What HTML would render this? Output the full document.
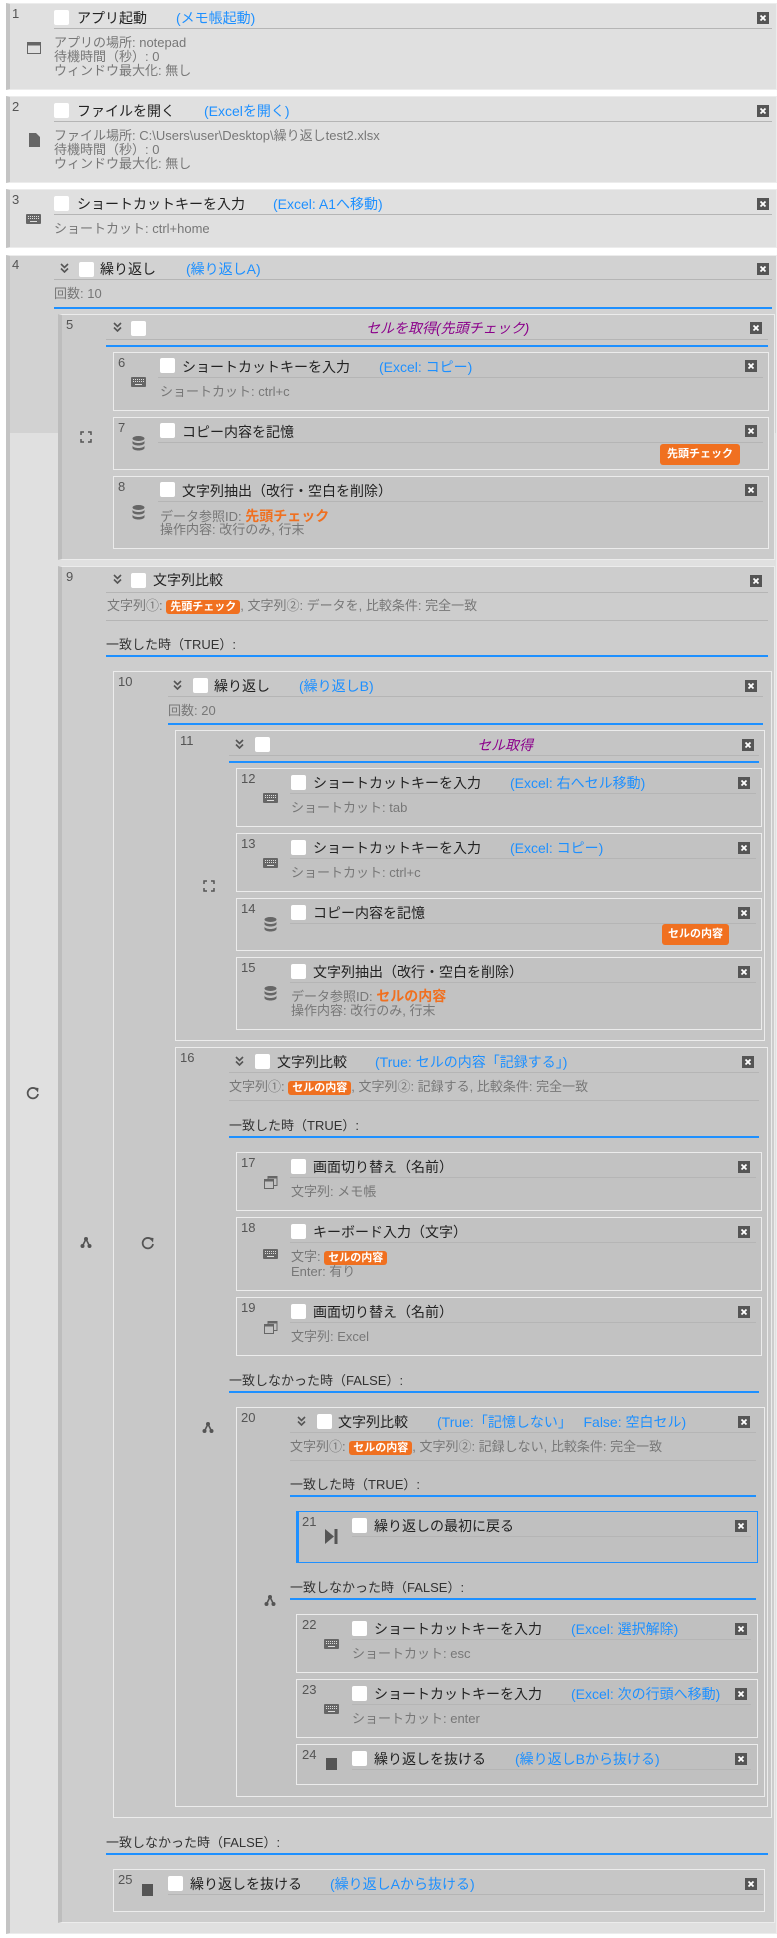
<!DOCTYPE html>
<html><head><meta charset="utf-8"><style>
body{margin:0;width:777px;height:1938px;background:#fff;position:relative;overflow:hidden;font-family:"Liberation Sans","Noto Sans CJK JP",sans-serif}
.a{position:absolute}
.bx{position:absolute;box-sizing:border-box;border:1px solid #ececec}
.n{position:absolute;font-size:13px;color:#555;line-height:14px}
.cb{position:absolute;width:15px;height:15px;background:#fff;border-radius:2px}
.t{position:absolute;font-size:14px;color:#222;line-height:16px;white-space:nowrap}
.s{position:absolute;font-size:14px;color:#1e90ff;line-height:16px;white-space:nowrap}
.p{position:absolute;font-size:14px;color:#8b008b;font-style:italic;line-height:16px;white-space:nowrap}
.d{position:absolute;font-size:13px;color:#777;line-height:14px;white-space:nowrap}
.lb{position:absolute;font-size:13px;color:#333;line-height:14px;white-space:nowrap}
.hl{position:absolute;height:1px;background:#b5b5b5}
.bl{position:absolute;height:2px;background:#1e90ff}
.bg{position:absolute;background:#f07020;color:#fff;font-weight:bold;font-size:11px;border-radius:3px;padding:1px 4px;line-height:13px}
.o{color:#f07020;font-weight:bold}
</style></head><body>
<svg width="0" height="0" style="position:absolute"><defs>
<g id="x"><rect width="12" height="12" fill="#555"/><path d="M3.5 3.5l5 5M8.5 3.5l-5 5" stroke="#fff" stroke-width="1.8"/></g>
<g id="ch"><path d="M1 1l3.5 3.5L8 1M1 5.5l3.5 3.5L8 5.5" fill="none" stroke="#555" stroke-width="1.6"/></g>
<g id="kb"><rect width="15" height="10" rx="1" fill="#666"/><path d="M2 2.5h11M2 4.5h11" stroke="#ddd" stroke-width="1" stroke-dasharray="1 1"/><path d="M4 7.5h7" stroke="#ddd"/></g>
<g id="db"><ellipse cx="6.5" cy="2.5" rx="6" ry="2.5" fill="#666"/><path d="M0.5 4.5c0 1.4 2.7 2.5 6 2.5s6-1.1 6-2.5v2.5c0 1.4-2.7 2.5-6 2.5s-6-1.1-6-2.5z" fill="#666"/><path d="M0.5 9.5c0 1.4 2.7 2.5 6 2.5s6-1.1 6-2.5v2.5c0 1.4-2.7 2.5-6 2.5s-6-1.1-6-2.5z" fill="#666"/></g>
<g id="ws"><rect x="4" y="0.5" width="9" height="9" fill="none" stroke="#666"/><rect x="4" y="0" width="9.5" height="2.5" fill="#666"/><rect x="0.5" y="3.5" width="9" height="9" fill="#c3c3c3" stroke="#666"/><rect x="0" y="3" width="10" height="2.5" fill="#666"/></g>
<g id="ex"><path d="M1 4V1h3M8 1h3v3M11 8v3H8M4 11H1V8" fill="none" stroke="#555" stroke-width="1.5"/></g>
<g id="lp"><path d="M11 4A5.2 5.2 0 1 0 12 8" fill="none" stroke="#555" stroke-width="1.8"/><path d="M8 1.5l4.5 0.5-0.5 4.5z" fill="#555"/></g>
<g id="br"><circle cx="6" cy="3" r="2" fill="#555"/><circle cx="2.5" cy="10" r="2" fill="#555"/><circle cx="9.5" cy="10" r="2" fill="#555"/><path d="M6 3L2.5 10M6 3l3.5 7" stroke="#555" stroke-width="1.6"/></g>
</defs></svg>

<!-- Block 1 -->
<div class="bx" style="left:6px;top:3px;width:771px;height:87px;background:#e0e0e0;border-left:4px solid #c4c4c4"></div>
<div class="n" style="left:12px;top:7px">1</div>
<div class="cb" style="left:54px;top:10px"></div>
<div class="t" style="left:77px;top:10px">アプリ起動</div>
<div class="s" style="left:176px;top:10px">(メモ帳起動)</div>
<svg class="a" style="left:757px;top:12px" width="12" height="12"><use href="#x"/></svg>
<div class="hl" style="left:54px;top:28px;width:718px"></div>
<svg class="a" style="left:27px;top:42px" width="14" height="12"><rect x=".5" y=".5" width="13" height="11" fill="none" stroke="#666"/><rect width="14" height="3.5" fill="#666"/></svg>
<div class="d" style="left:54px;top:36px">アプリの場所: notepad</div>
<div class="d" style="left:54px;top:50px">待機時間（秒）: 0</div>
<div class="d" style="left:54px;top:64px">ウィンドウ最大化: 無し</div>

<!-- Block 2 -->
<div class="bx" style="left:6px;top:96px;width:771px;height:87px;background:#e0e0e0;border-left:4px solid #c4c4c4"></div>
<div class="n" style="left:12px;top:100px">2</div>
<div class="cb" style="left:54px;top:103px"></div>
<div class="t" style="left:77px;top:103px">ファイルを開く</div>
<div class="s" style="left:204px;top:103px">(Excelを開く)</div>
<svg class="a" style="left:757px;top:105px" width="12" height="12"><use href="#x"/></svg>
<div class="hl" style="left:54px;top:121px;width:718px"></div>
<svg class="a" style="left:29px;top:133px" width="11" height="14"><path d="M0 0h7l4 4v10H0z" fill="#666"/></svg>
<div class="d" style="left:54px;top:129px">ファイル場所: C:\Users\user\Desktop\繰り返しtest2.xlsx</div>
<div class="d" style="left:54px;top:143px">待機時間（秒）: 0</div>
<div class="d" style="left:54px;top:157px">ウィンドウ最大化: 無し</div>

<!-- Block 3 -->
<div class="bx" style="left:6px;top:189px;width:771px;height:59px;background:#e0e0e0;border-left:4px solid #c4c4c4"></div>
<div class="n" style="left:12px;top:193px">3</div>
<div class="cb" style="left:54px;top:196px"></div>
<div class="t" style="left:77px;top:196px">ショートカットキーを入力</div>
<div class="s" style="left:273px;top:196px">(Excel: A1へ移動)</div>
<svg class="a" style="left:757px;top:198px" width="12" height="12"><use href="#x"/></svg>
<div class="hl" style="left:54px;top:214px;width:718px"></div>
<svg class="a" style="left:26px;top:214px" width="15" height="10"><use href="#kb"/></svg>
<div class="d" style="left:54px;top:222px">ショートカット: ctrl+home</div>

<!-- Block 4 -->
<div class="bx" style="left:6px;top:255px;width:771px;height:1679px;background:#e0e0e0;border-left:4px solid #c4c4c4"></div>
<div class="a" style="left:10px;top:256px;width:766px;height:177px;background:#d2d2d2"></div>
<div class="n" style="left:12px;top:258px">4</div>
<svg class="a" style="left:60px;top:263px" width="9" height="10"><use href="#ch"/></svg>
<div class="cb" style="left:79px;top:262px"></div>
<div class="t" style="left:100px;top:261px">繰り返し</div>
<div class="s" style="left:186px;top:261px">(繰り返しA)</div>
<svg class="a" style="left:757px;top:263px" width="12" height="12"><use href="#x"/></svg>
<div class="hl" style="left:54px;top:279px;width:718px"></div>
<div class="d" style="left:54px;top:287px">回数: 10</div>
<div class="bl" style="left:54px;top:307px;width:718px"></div>
<svg class="a" style="left:26px;top:1086px" width="14" height="14"><use href="#lp"/></svg>

<!-- Block 5 -->
<div class="bx" style="left:58px;top:314px;width:717px;height:246px;background:#cbcbcb;border-left:4px solid #bdbdbd"></div>
<div class="n" style="left:66px;top:318px">5</div>
<svg class="a" style="left:113px;top:322px" width="9" height="10"><use href="#ch"/></svg>
<div class="cb" style="left:131px;top:321px"></div>
<div class="p" style="left:366px;top:320px">セルを取得(先頭チェック)</div>
<svg class="a" style="left:750px;top:322px" width="12" height="12"><use href="#x"/></svg>
<div class="hl" style="left:106px;top:339px;width:662px"></div>
<div class="bl" style="left:106px;top:345px;width:662px"></div>
<svg class="a" style="left:80px;top:431px" width="12" height="12"><use href="#ex"/></svg>

<div class="bx" style="left:113px;top:352px;width:656px;height:59px;background:#c5c5c5"></div>
<div class="n" style="left:118px;top:356px">6</div>
<svg class="a" style="left:131px;top:377px" width="15" height="10"><use href="#kb"/></svg>
<div class="cb" style="left:160px;top:358px"></div>
<div class="t" style="left:182px;top:359px">ショートカットキーを入力</div>
<div class="s" style="left:379px;top:359px">(Excel: コピー)</div>
<svg class="a" style="left:745px;top:360px" width="12" height="12"><use href="#x"/></svg>
<div class="hl" style="left:158px;top:377px;width:605px"></div>
<div class="d" style="left:160px;top:385px">ショートカット: ctrl+c</div>

<div class="bx" style="left:113px;top:417px;width:656px;height:53px;background:#c5c5c5"></div>
<div class="n" style="left:118px;top:421px">7</div>
<svg class="a" style="left:132px;top:436px" width="13" height="15"><use href="#db"/></svg>
<div class="cb" style="left:160px;top:423px"></div>
<div class="t" style="left:182px;top:424px">コピー内容を記憶</div>
<svg class="a" style="left:745px;top:425px" width="12" height="12"><use href="#x"/></svg>
<div class="hl" style="left:158px;top:442px;width:605px"></div>
<div class="bg" style="left:660px;top:444px;padding:4px 7px">先頭チェック</div>

<div class="bx" style="left:113px;top:476px;width:656px;height:73px;background:#c5c5c5"></div>
<div class="n" style="left:118px;top:480px">8</div>
<svg class="a" style="left:132px;top:505px" width="13" height="15"><use href="#db"/></svg>
<div class="cb" style="left:160px;top:482px"></div>
<div class="t" style="left:182px;top:483px">文字列抽出（改行・空白を削除）</div>
<svg class="a" style="left:745px;top:484px" width="12" height="12"><use href="#x"/></svg>
<div class="hl" style="left:158px;top:501px;width:605px"></div>
<div class="d" style="left:160px;top:509px">データ参照ID: <span class="o" style="font-size:14px">先頭チェック</span></div>
<div class="d" style="left:160px;top:523px">操作内容: 改行のみ, 行末</div>

<!-- Block 9 -->
<div class="bx" style="left:58px;top:566px;width:717px;height:1357px;background:#cdcdcd;border-left:4px solid #bdbdbd"></div>
<div class="n" style="left:66px;top:570px">9</div>
<svg class="a" style="left:113px;top:574px" width="9" height="10"><use href="#ch"/></svg>
<div class="cb" style="left:131px;top:573px"></div>
<div class="t" style="left:153px;top:572px">文字列比較</div>
<svg class="a" style="left:750px;top:575px" width="12" height="12"><use href="#x"/></svg>
<div class="hl" style="left:106px;top:592px;width:662px"></div>
<div class="d" style="left:107px;top:599px">文字列①: <span class="bg" style="position:static">先頭チェック</span>, 文字列②: データを, 比較条件: 完全一致</div>
<div class="hl" style="left:106px;top:620px;width:662px"></div>
<div class="lb" style="left:106px;top:638px">一致した時（TRUE）:</div>
<div class="bl" style="left:106px;top:655px;width:662px"></div>
<svg class="a" style="left:80px;top:1236px" width="12" height="13"><use href="#br"/></svg>

<!-- Block 10 -->
<div class="bx" style="left:113px;top:671px;width:659px;height:1147px;background:#c8c8c8"></div>
<div class="n" style="left:118px;top:675px">10</div>
<svg class="a" style="left:173px;top:680px" width="9" height="10"><use href="#ch"/></svg>
<div class="cb" style="left:193px;top:678px"></div>
<div class="t" style="left:214px;top:678px">繰り返し</div>
<div class="s" style="left:299px;top:678px">(繰り返しB)</div>
<svg class="a" style="left:745px;top:680px" width="12" height="12"><use href="#x"/></svg>
<div class="hl" style="left:168px;top:696px;width:595px"></div>
<div class="d" style="left:168px;top:704px">回数: 20</div>
<div class="bl" style="left:168px;top:723px;width:595px"></div>
<svg class="a" style="left:141px;top:1236px" width="14" height="14"><use href="#lp"/></svg>

<!-- Block 11 -->
<div class="bx" style="left:175px;top:730px;width:590px;height:311px;background:#c5c5c5"></div>
<div class="n" style="left:180px;top:734px">11</div>
<svg class="a" style="left:235px;top:739px" width="9" height="10"><use href="#ch"/></svg>
<div class="cb" style="left:255px;top:737px"></div>
<div class="p" style="left:477px;top:737px">セル取得</div>
<svg class="a" style="left:742px;top:739px" width="12" height="12"><use href="#x"/></svg>
<div class="hl" style="left:229px;top:755px;width:530px"></div>
<div class="bl" style="left:229px;top:761px;width:530px"></div>
<svg class="a" style="left:203px;top:880px" width="12" height="12"><use href="#ex"/></svg>

<div class="bx" style="left:236px;top:768px;width:526px;height:59px;background:#c2c2c2"></div>
<div class="n" style="left:241px;top:772px">12</div>
<svg class="a" style="left:263px;top:793px" width="15" height="10"><use href="#kb"/></svg>
<div class="cb" style="left:291px;top:775px"></div>
<div class="t" style="left:313px;top:775px">ショートカットキーを入力</div>
<div class="s" style="left:510px;top:775px">(Excel: 右へセル移動)</div>
<svg class="a" style="left:738px;top:777px" width="12" height="12"><use href="#x"/></svg>
<div class="hl" style="left:290px;top:793px;width:466px"></div>
<div class="d" style="left:291px;top:801px">ショートカット: tab</div>

<div class="bx" style="left:236px;top:833px;width:526px;height:59px;background:#c2c2c2"></div>
<div class="n" style="left:241px;top:837px">13</div>
<svg class="a" style="left:263px;top:858px" width="15" height="10"><use href="#kb"/></svg>
<div class="cb" style="left:291px;top:840px"></div>
<div class="t" style="left:313px;top:840px">ショートカットキーを入力</div>
<div class="s" style="left:510px;top:840px">(Excel: コピー)</div>
<svg class="a" style="left:738px;top:842px" width="12" height="12"><use href="#x"/></svg>
<div class="hl" style="left:290px;top:858px;width:466px"></div>
<div class="d" style="left:291px;top:866px">ショートカット: ctrl+c</div>

<div class="bx" style="left:236px;top:898px;width:526px;height:53px;background:#c2c2c2"></div>
<div class="n" style="left:241px;top:902px">14</div>
<svg class="a" style="left:264px;top:917px" width="13" height="15"><use href="#db"/></svg>
<div class="cb" style="left:291px;top:905px"></div>
<div class="t" style="left:313px;top:905px">コピー内容を記憶</div>
<svg class="a" style="left:738px;top:907px" width="12" height="12"><use href="#x"/></svg>
<div class="hl" style="left:290px;top:923px;width:466px"></div>
<div class="bg" style="left:662px;top:924px;padding:4px 6px">セルの内容</div>

<div class="bx" style="left:236px;top:957px;width:526px;height:73px;background:#c2c2c2"></div>
<div class="n" style="left:241px;top:961px">15</div>
<svg class="a" style="left:264px;top:986px" width="13" height="15"><use href="#db"/></svg>
<div class="cb" style="left:291px;top:964px"></div>
<div class="t" style="left:313px;top:964px">文字列抽出（改行・空白を削除）</div>
<svg class="a" style="left:738px;top:966px" width="12" height="12"><use href="#x"/></svg>
<div class="hl" style="left:290px;top:982px;width:466px"></div>
<div class="d" style="left:291px;top:989px">データ参照ID: <span class="o" style="font-size:14px">セルの内容</span></div>
<div class="d" style="left:291px;top:1004px">操作内容: 改行のみ, 行末</div>

<!-- Block 16 -->
<div class="bx" style="left:175px;top:1047px;width:593px;height:760px;background:#c5c5c5"></div>
<div class="n" style="left:180px;top:1051px">16</div>
<svg class="a" style="left:235px;top:1056px" width="9" height="10"><use href="#ch"/></svg>
<div class="cb" style="left:255px;top:1054px"></div>
<div class="t" style="left:277px;top:1054px">文字列比較</div>
<div class="s" style="left:375px;top:1054px">(True: セルの内容「記録する」)</div>
<svg class="a" style="left:742px;top:1056px" width="12" height="12"><use href="#x"/></svg>
<div class="hl" style="left:229px;top:1072px;width:530px"></div>
<div class="d" style="left:229px;top:1080px">文字列①: <span class="bg" style="position:static">セルの内容</span>, 文字列②: 記録する, 比較条件: 完全一致</div>
<div class="hl" style="left:229px;top:1100px;width:530px"></div>
<div class="lb" style="left:229px;top:1119px">一致した時（TRUE）:</div>
<div class="bl" style="left:229px;top:1136px;width:530px"></div>
<svg class="a" style="left:202px;top:1421px" width="12" height="13"><use href="#br"/></svg>

<div class="bx" style="left:236px;top:1152px;width:526px;height:59px;background:#c2c2c2"></div>
<div class="n" style="left:241px;top:1156px">17</div>
<svg class="a" style="left:264px;top:1176px" width="14" height="13"><use href="#ws"/></svg>
<div class="cb" style="left:291px;top:1159px"></div>
<div class="t" style="left:313px;top:1159px">画面切り替え（名前）</div>
<svg class="a" style="left:738px;top:1161px" width="12" height="12"><use href="#x"/></svg>
<div class="hl" style="left:290px;top:1177px;width:466px"></div>
<div class="d" style="left:291px;top:1185px">文字列: メモ帳</div>

<div class="bx" style="left:236px;top:1217px;width:526px;height:74px;background:#c2c2c2"></div>
<div class="n" style="left:241px;top:1221px">18</div>
<svg class="a" style="left:263px;top:1249px" width="15" height="10"><use href="#kb"/></svg>
<div class="cb" style="left:291px;top:1224px"></div>
<div class="t" style="left:313px;top:1224px">キーボード入力（文字）</div>
<svg class="a" style="left:738px;top:1226px" width="12" height="12"><use href="#x"/></svg>
<div class="hl" style="left:290px;top:1242px;width:466px"></div>
<div class="d" style="left:291px;top:1250px">文字: <span class="bg" style="position:static">セルの内容</span></div>
<div class="d" style="left:291px;top:1265px">Enter: 有り</div>

<div class="bx" style="left:236px;top:1297px;width:526px;height:59px;background:#c2c2c2"></div>
<div class="n" style="left:241px;top:1301px">19</div>
<svg class="a" style="left:264px;top:1321px" width="14" height="13"><use href="#ws"/></svg>
<div class="cb" style="left:291px;top:1304px"></div>
<div class="t" style="left:313px;top:1304px">画面切り替え（名前）</div>
<svg class="a" style="left:738px;top:1306px" width="12" height="12"><use href="#x"/></svg>
<div class="hl" style="left:290px;top:1322px;width:466px"></div>
<div class="d" style="left:291px;top:1330px">文字列: Excel</div>

<div class="lb" style="left:229px;top:1374px">一致しなかった時（FALSE）:</div>
<div class="bl" style="left:229px;top:1391px;width:530px"></div>

<!-- Block 20 -->
<div class="bx" style="left:236px;top:1407px;width:529px;height:390px;background:#c2c2c2"></div>
<div class="n" style="left:241px;top:1411px">20</div>
<svg class="a" style="left:297px;top:1416px" width="9" height="10"><use href="#ch"/></svg>
<div class="cb" style="left:317px;top:1414px"></div>
<div class="t" style="left:338px;top:1414px">文字列比較</div>
<div class="s" style="left:437px;top:1414px">(True:「記憶しない」&nbsp;&nbsp; False: 空白セル)</div>
<svg class="a" style="left:738px;top:1416px" width="12" height="12"><use href="#x"/></svg>
<div class="hl" style="left:290px;top:1432px;width:466px"></div>
<div class="d" style="left:290px;top:1440px">文字列①: <span class="bg" style="position:static">セルの内容</span>, 文字列②: 記録しない, 比較条件: 完全一致</div>
<div class="hl" style="left:290px;top:1460px;width:466px"></div>
<div class="lb" style="left:290px;top:1478px">一致した時（TRUE）:</div>
<div class="bl" style="left:290px;top:1495px;width:466px"></div>
<svg class="a" style="left:264px;top:1594px" width="12" height="13"><use href="#br"/></svg>

<div class="bx" style="left:296px;top:1511px;width:462px;height:52px;background:#c0c0c0;border:1px solid #1e90ff;border-left:3px solid #1e90ff"></div>
<div class="n" style="left:302px;top:1515px">21</div>
<svg class="a" style="left:325px;top:1529px" width="13" height="15"><path d="M0 0l9 7.5L0 15z" fill="#555"/><rect x="9.5" y="0" width="3" height="15" fill="#555"/></svg>
<div class="cb" style="left:352px;top:1518px"></div>
<div class="t" style="left:374px;top:1518px">繰り返しの最初に戻る</div>
<svg class="a" style="left:735px;top:1520px" width="12" height="12"><use href="#x"/></svg>
<div class="hl" style="left:352px;top:1536px;width:399px"></div>

<div class="lb" style="left:290px;top:1581px">一致しなかった時（FALSE）:</div>
<div class="bl" style="left:290px;top:1598px;width:466px"></div>

<div class="bx" style="left:296px;top:1614px;width:462px;height:59px;background:#c0c0c0"></div>
<div class="n" style="left:302px;top:1618px">22</div>
<svg class="a" style="left:324px;top:1639px" width="15" height="10"><use href="#kb"/></svg>
<div class="cb" style="left:352px;top:1621px"></div>
<div class="t" style="left:374px;top:1621px">ショートカットキーを入力</div>
<div class="s" style="left:571px;top:1621px">(Excel: 選択解除)</div>
<svg class="a" style="left:735px;top:1623px" width="12" height="12"><use href="#x"/></svg>
<div class="hl" style="left:352px;top:1639px;width:399px"></div>
<div class="d" style="left:352px;top:1647px">ショートカット: esc</div>

<div class="bx" style="left:296px;top:1679px;width:462px;height:59px;background:#c0c0c0"></div>
<div class="n" style="left:302px;top:1683px">23</div>
<svg class="a" style="left:324px;top:1704px" width="15" height="10"><use href="#kb"/></svg>
<div class="cb" style="left:352px;top:1686px"></div>
<div class="t" style="left:374px;top:1686px">ショートカットキーを入力</div>
<div class="s" style="left:571px;top:1686px">(Excel: 次の行頭へ移動)</div>
<svg class="a" style="left:735px;top:1688px" width="12" height="12"><use href="#x"/></svg>
<div class="hl" style="left:352px;top:1704px;width:399px"></div>
<div class="d" style="left:352px;top:1712px">ショートカット: enter</div>

<div class="bx" style="left:296px;top:1744px;width:462px;height:41px;background:#c0c0c0"></div>
<div class="n" style="left:302px;top:1748px">24</div>
<div class="a" style="left:326px;top:1758px;width:11px;height:12px;background:#555"></div>
<div class="cb" style="left:352px;top:1751px"></div>
<div class="t" style="left:374px;top:1751px">繰り返しを抜ける</div>
<div class="s" style="left:515px;top:1751px">(繰り返しBから抜ける)</div>
<svg class="a" style="left:735px;top:1753px" width="12" height="12"><use href="#x"/></svg>
<div class="hl" style="left:352px;top:1769px;width:399px"></div>

<div class="lb" style="left:106px;top:1836px">一致しなかった時（FALSE）:</div>
<div class="bl" style="left:106px;top:1853px;width:662px"></div>

<div class="bx" style="left:113px;top:1869px;width:652px;height:43px;background:#c6c6c6"></div>
<div class="n" style="left:118px;top:1873px">25</div>
<div class="a" style="left:142px;top:1884px;width:11px;height:12px;background:#555"></div>
<div class="cb" style="left:168px;top:1876px"></div>
<div class="t" style="left:190px;top:1876px">繰り返しを抜ける</div>
<div class="s" style="left:330px;top:1876px">(繰り返しAから抜ける)</div>
<svg class="a" style="left:745px;top:1878px" width="12" height="12"><use href="#x"/></svg>
<div class="hl" style="left:168px;top:1894px;width:595px"></div>
</body></html>
